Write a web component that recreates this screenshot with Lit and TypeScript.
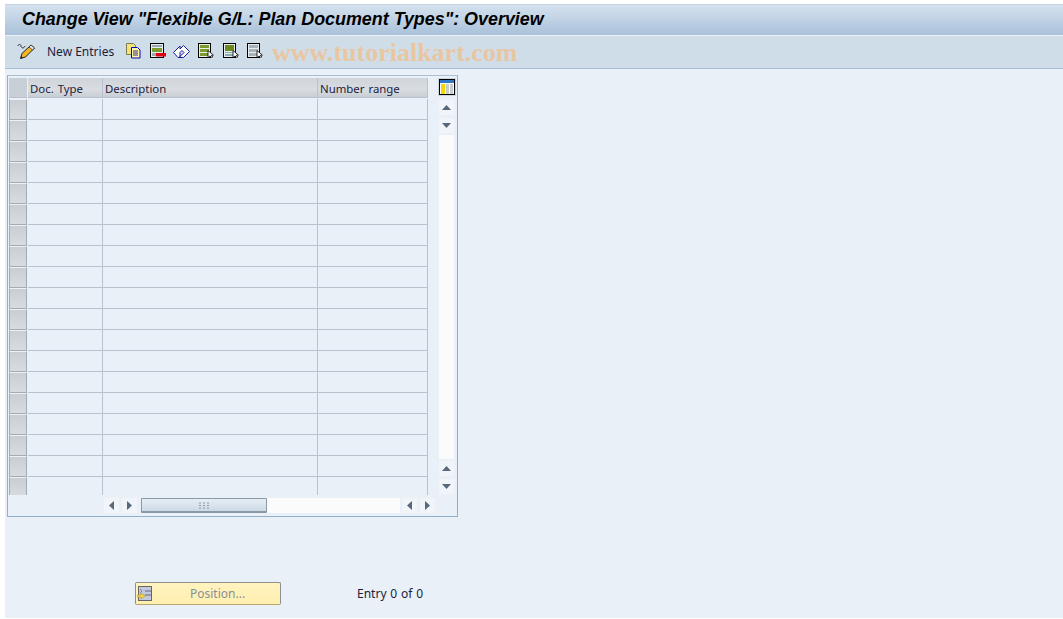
import { LitElement, html, css, svg } from "lit";
import { customElement } from "lit/decorators.js";

const rows = Array.from({ length: 19 });

const docIcon = (fill: string, header: boolean) => svg`
  <rect x="0.5" y="0.5" width="12" height="14" fill="#e8eef0" stroke="#000"/>
  ${header
    ? svg`<rect x="2" y="2" width="9" height="6" fill="#6b8a1e"/><rect x="2" y="9" width="9" height="1" fill="#8aa"/><rect x="2" y="11" width="9" height="2" fill="#8aa"/>`
    : svg`<rect x="2" y="2" width="9" height="3" fill="${fill}"/><rect x="2" y="6" width="9" height="3" fill="${fill}"/><rect x="2" y="10" width="9" height="3" fill="${fill}"/>`}
  <path d="M10 7.500v7l2-1.500 2 1.500.8-.6-1.400-1.600 2-.2z" fill="#fff" stroke="#000" stroke-width=".8"/>`;

@customElement("app-root")
export class AppRoot extends LitElement {
  static styles = css`
    :host { display: block; width: 1063px; height: 619px; background: #fff; font-family: "Noto Sans", "DejaVu Sans", sans-serif; font-size: 12px; color: #1c1c3c; overflow: hidden; }
    .page { box-sizing: border-box; height: 614px; margin: 4px 0 0 5px; background: #e9f0f7; display: flex; flex-direction: column; }
    .title { height: 32px; flex: none; box-sizing: border-box; padding: 0 0 2px 17px; display: flex; align-items: center; background: linear-gradient(#d5e2ee, #a9c1da); border-top: 1px solid #c3d3e2; border-bottom: 1px solid #eef3f8; font: italic bold 17.900px "Liberation Sans", sans-serif; color: #000; white-space: nowrap; }
    .tools { height: 33px; flex: none; box-sizing: border-box; background: #cfdde9; border-bottom: 1px solid #a9bfd4; display: flex; align-items: center; padding: 0 0 2px 12px; }
    .tools svg { display: block; flex: none; }
    .entries { margin: 0 0 0 11px; width: 67px; white-space: nowrap; }
    .ic { margin-right: 9px; }
    .wm { margin: 3px 0 0 8px; font: bold 26px "Liberation Serif", serif; color: #e9c6a2; white-space: nowrap; }
    .panel { margin: 6px 0 0 2px; width: 451px; height: 442px; flex: none; box-sizing: border-box; border: 1px solid #8fb0cc; border-top-color: #a9bfd4; padding: 2px 0 0 1px; display: grid; grid-template-columns: 429px 1fr; grid-template-rows: 417px 1fr; }
    .grid { display: grid; grid-template-columns: 19px 75px 215px 110px; grid-auto-rows: 21px; overflow: hidden; }
    .hd { height: 20px; box-sizing: border-box; padding: 2px 0 0 2px; display: flex; align-items: center; background: linear-gradient(#cfd4da, #d9dde2 60%, #c9ced4); border-right: 1px solid #b9c3cf; border-bottom: 1px solid #b9c3cf; white-space: nowrap; font-size: 11.400px; word-spacing: 1px; }
    .hd.corner { background: #c8cfd6; border-right: 0; margin-right: 1px; }
    .rh { box-sizing: border-box; height: 21px; margin-right: 1px; background: linear-gradient(#c9ced4, #d8dce1); border: 1px solid #a3acb6; border-top-color: #eef1f4; }
    .c { box-sizing: border-box; height: 21px; border-right: 1px solid #b9c3cf; border-bottom: 1px solid #b9c3cf; }
    .vs { display: flex; flex-direction: column; align-items: flex-start; padding-left: 1px; }
    .cfg { display: block; flex: none; margin: 0 0 4px -1px; padding: 1px; background: #cdd6df; }
    .sb { width: 15px; height: 15px; background: #f1f5f9; display: flex; align-items: center; justify-content: center; flex: none; }
    .sb svg { display: block; }
    .vs .sb { margin-bottom: 3px; }
    .vtrack { width: 15px; flex: none; height: 324px; background: #fbfbfb; margin: -1px 0 2px; }
    .hs { grid-column: 1; display: flex; align-items: flex-start; padding: 3px 0 0 95px; }
    .hs .sb { margin-right: 3px; }
    .thumb { width: 126px; height: 15px; flex: none; box-sizing: border-box; margin-left: 1px; border: 1px solid #8b99a6; border-bottom-width: 2px; border-radius: 1px; background: linear-gradient(#e6eef5, #ccdae6); display: flex; align-items: center; justify-content: center; }
    .thumb svg { display: block; }
    .htrack { width: 133px; height: 15px; background: #fbfbfb; margin-right: 2px; flex: none; }
    .foot { display: flex; align-items: center; margin: 65px 0 0 130px; }
    .pos { width: 146px; height: 23px; box-sizing: border-box; border: 1px solid #8f8f8f; border-bottom-color: #b5a76c; border-radius: 2px; background: linear-gradient(#fff3c0, #ffefb0); display: flex; align-items: center; padding: 0 0 0 1px; color: #8a8f98; }
    .pos span { flex: 1; padding-left: 38px; white-space: nowrap; }
    .count { margin-left: 76px; color: #1c1c3c; white-space: nowrap; word-spacing: .7px; }
  `;

  up() { return html`<svg width="9" height="5"><path d="M4.500 0L9 5H0z" fill="#56687a"/></svg>`; }
  down() { return html`<svg width="9" height="5"><path d="M0 0h9L4.500 5z" fill="#56687a"/></svg>`; }
  left() { return html`<svg width="5" height="9"><path d="M5 0v9L0 4.500z" fill="#56687a"/></svg>`; }
  right() { return html`<svg width="5" height="9"><path d="M0 0v9l5-4.500z" fill="#56687a"/></svg>`; }

  render() {
    return html`<div class="page">
      <div class="title">Change View "Flexible G/L: Plan Document Types": Overview</div>
      <div class="tools">
        <svg width="19" height="16" viewBox="0 0 19 16">
          <path d="M1 3c0-2 3-2 3 0s3 3 4 0" fill="none" stroke="#333"/>
          <path d="M14 2l3.500 3-9 9-5 1.500 1.500-5z" fill="#f4b428" stroke="#222"/>
          <path d="M14 2l3.500 3-2 2-3.500-3z" fill="#e8e8e8" stroke="#222" stroke-width=".7"/>
          <path d="M3.500 15.500l.7-2.500 1.800 1.800z" fill="#222"/>
        </svg>
        <div class="entries">New Entries</div>
        <svg class="ic" width="15" height="16" viewBox="0 0 15 16" style="margin-left:12px">
          <path d="M.5.5h7l2 2v9h-9z" fill="#f3e27a" stroke="#7d7d50"/>
          <path d="M5.500 4.500h6l2.500 2.500v8H5.500z" fill="#fff6a8" stroke="#0000c8"/>
          <path d="M7 8h5M7 10h5M7 12h5" stroke="#2a2a80"/>
        </svg>
        <svg class="ic" width="16" height="16" viewBox="0 0 16 16" style="margin-right:7px">
          <rect x=".5" y=".5" width="13" height="14" fill="#e8eef0" stroke="#000"/>
          <rect x="2" y="2" width="10" height="2" fill="#98a8b0"/>
          <rect x="2" y="5" width="10" height="4" fill="#7d9a2c"/>
          <rect x="2" y="10" width="6" height="3" fill="#98a8b0"/>
          <rect x="6" y="10" width="10" height="3.500" fill="#e00010"/>
        </svg>
        <svg class="ic" width="18" height="16" viewBox="0 0 18 16" style="margin-right:7px">
          <path d="M.5 9.500L7 3v3l3.500-3.500 6 6-6 6H6l5-5-2-2-2 2v5H5z" fill="#fff" stroke="#1a1a9a"/>
        </svg>
        <svg class="ic" width="17" height="16" viewBox="0 0 17 16" style="margin-right:8px">${docIcon("#7d9a2c", false)}</svg>
        <svg class="ic" width="17" height="16" viewBox="0 0 17 16" style="margin-right:7px">${docIcon("", true)}</svg>
        <svg class="ic" width="17" height="16" viewBox="0 0 17 16" style="margin-right:0">${docIcon("#a8b2b8", false)}</svg>
        <div class="wm">www.tutorialkart.com</div>
      </div>
      <div class="panel">
        <div class="grid">
          <div class="hd corner"></div>
          <div class="hd">Doc. Type</div>
          <div class="hd">Description</div>
          <div class="hd">Number range</div>
          ${rows.map(() => html`<div class="rh"></div><div class="c"></div><div class="c"></div><div class="c"></div>`)}
        </div>
        <div class="vs">
          <svg class="cfg" width="16" height="16" viewBox="0 0 16 16">
            <rect x=".5" y=".5" width="15" height="15" fill="#fff" stroke="#000"/>
            <rect x="1" y="1" width="14" height="3" fill="#2f78c8"/>
            <rect x="2" y="5" width="4" height="10" fill="#f5d800"/>
            <rect x="7" y="5" width="3" height="10" fill="#c8ccd0"/>
            <rect x="11" y="5" width="3" height="10" fill="#c8ccd0"/>
          </svg>
          <div class="sb">${this.up()}</div>
          <div class="sb">${this.down()}</div>
          <div class="vtrack"></div>
          <div class="sb">${this.up()}</div>
          <div class="sb">${this.down()}</div>
        </div>
        <div class="hs">
          <div class="sb">${this.left()}</div>
          <div class="sb">${this.right()}</div>
          <div class="thumb"><svg width="10" height="7"><path d="M0 1h2M4 1h2M8 1h2M0 3.500h2M4 3.500h2M8 3.500h2M0 6h2M4 6h2M8 6h2" stroke="#8b99a6"/></svg></div>
          <div class="htrack"></div>
          <div class="sb">${this.left()}</div>
          <div class="sb">${this.right()}</div>
        </div>
      </div>
      <div class="foot">
        <div class="pos">
          <svg width="15" height="16" viewBox="0 0 15 16">
            <rect x="1.500" y=".5" width="13" height="14" fill="#c4c8dc" stroke="#666"/>
            <path d="M8 5h6M8 9h6" stroke="#667"/>
            <path d="M3 3l2 2-2 2" fill="none" stroke="#888"/>
            <path d="M0 9h4V7l4 3-4 3v-2H0z" fill="#f5d840" stroke="#b59a20" stroke-width=".6"/>
          </svg>
          <span>Position...</span>
        </div>
        <div class="count">Entry 0 of 0</div>
      </div>
    </div>`;
  }
}
